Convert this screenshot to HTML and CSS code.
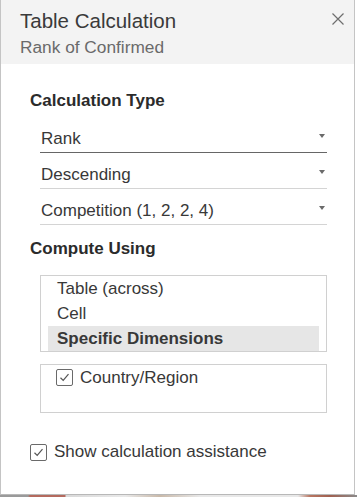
FILE: index.html
```html
<!DOCTYPE HTML>
<html>
	<head>
		<meta charset="utf-8">
		<title>Table Calculation</title>
		<link rel="stylesheet" href="styles.css">
	</head>
	<body>
		<div class="dialog">
			<div class="dialog-header">
				<div class="titles">
					<h1>Table Calculation</h1>
					<p class="subtitle">Rank of Confirmed</p>
				</div>
				<button class="close" type="button" aria-label="Close">
					<svg width="12" height="12" viewBox="0 0 12 12"><path d="M0.5 0.5 L11.5 11.5 M11.5 0.5 L0.5 11.5" stroke="#6e6e6e" stroke-width="1.2" fill="none"/></svg>
				</button>
			</div>
			<div class="dialog-body">
				<h2>Calculation Type</h2>
				<div class="dropdown active"><span>Rank</span><span class="caret"></span></div>
				<div class="dropdown"><span>Descending</span><span class="caret"></span></div>
				<div class="dropdown"><span>Competition (1, 2, 2, 4)</span><span class="caret"></span></div>

				<h2 class="compute">Compute Using</h2>
				<ul class="listbox">
					<li>Table (across)</li>
					<li>Cell</li>
					<li class="selected">Specific Dimensions</li>
				</ul>
				<ul class="listbox dims">
					<li><span class="checkbox"><svg width="11" height="9" viewBox="0 0 11 9"><path d="M1.5 4.8 L4.2 7.4 L9.5 1.2" stroke="#555" stroke-width="1.2" fill="none"/></svg></span>Country/Region</li>
				</ul>

				<label class="assist"><span class="checkbox"><svg width="11" height="9" viewBox="0 0 11 9"><path d="M1.5 4.8 L4.2 7.4 L9.5 1.2" stroke="#555" stroke-width="1.2" fill="none"/></svg></span>Show calculation assistance</label>
			</div>
		</div>
		<div class="backdrop"></div>
	</body>
</html>
```
FILE: styles.css
```css
* { margin: 0; padding: 0; box-sizing: border-box; }
body {
	background: #fff;
	color: #383838;
	font-family: 'Liberation Sans', Arial, sans-serif;
	font-size: 17px;
	width: 357px;
	height: 497px;
	overflow: hidden;
}
.dialog {
	background: #fff;
	border-left: 1px solid #c4c4c4;
	border-right: 1px solid #c4c4c4;
	border-bottom: 1px solid #b8b8b8;
	height: 495px;
	width: 355px;
}
.dialog-header {
	background: #f3f3f3;
	display: flex;
	justify-content: space-between;
	height: 64px;
	padding: 9px 10px 0 19px;
}
h1 {
	color: #3a3a3a;
	font-size: 20.5px;
	font-weight: normal;
	line-height: 24px;
}
.subtitle {
	color: #6a6a6a;
	font-size: 17.3px;
	line-height: 22px;
	margin-top: 3px;
}
.close {
	align-self: flex-start;
	background: none;
	border: none;
	cursor: pointer;
	display: flex;
	margin-top: 4px;
}
.dialog-body {
	padding: 25px 27px 0 29px;
}
h2 {
	color: #2b2b2b;
	font-size: 17px;
	line-height: 24px;
	margin-bottom: 4px;
}
h2.compute {
	margin: 12px 0 0;
}
.dropdown {
	border-bottom: 1px solid #d4d4d4;
	display: flex;
	justify-content: space-between;
	align-items: center;
	height: 36px;
	line-height: 23px;
	margin-left: 10px;
	padding: 10px 2px 2px 1px;
}
.dropdown.active {
	border-bottom-color: #666;
}
.caret {
	border-left: 3px solid transparent;
	border-right: 3px solid transparent;
	border-top: 4px solid #6a6a6a;
	margin-top: -6px;
}
ol,ul {
	list-style: none;
}
.listbox {
	border: 1px solid #d0d0d0;
	margin: 14px 0 0 10px;
	padding: 0 7px;
	height: 77px;
}
.listbox li {
	line-height: 25px;
	padding-left: 9px;
}
.listbox li.selected {
	background: #e6e6e6;
	font-weight: bold;
}
.listbox.dims {
	height: 49px;
	margin-top: 12px;
	padding: 0 8px;
}
.listbox.dims li {
	display: flex;
	align-items: center;
	gap: 7px;
	padding-left: 7px;
}
.checkbox {
	align-items: center;
	border: 1px solid #6a6a6a;
	border-radius: 2px;
	display: inline-flex;
	height: 17px;
	justify-content: center;
	width: 17px;
}
.assist {
	align-items: center;
	display: flex;
	gap: 7px;
	line-height: 24px;
	margin-top: 27px;
}
.backdrop {
	height: 2px;
	background: linear-gradient(to right, #9a9a9a 0, #9a9a9a 28px, #b46a5e 30px, #b46a5e 65px, #d9d9d9 66px, #e9e9e9 125px, #c9b9a9 160px, #e8e8e8 200px, #e8e8e8 298px, #b87662 310px, #a06050 330px, #8a8a8a 357px);
}
```
